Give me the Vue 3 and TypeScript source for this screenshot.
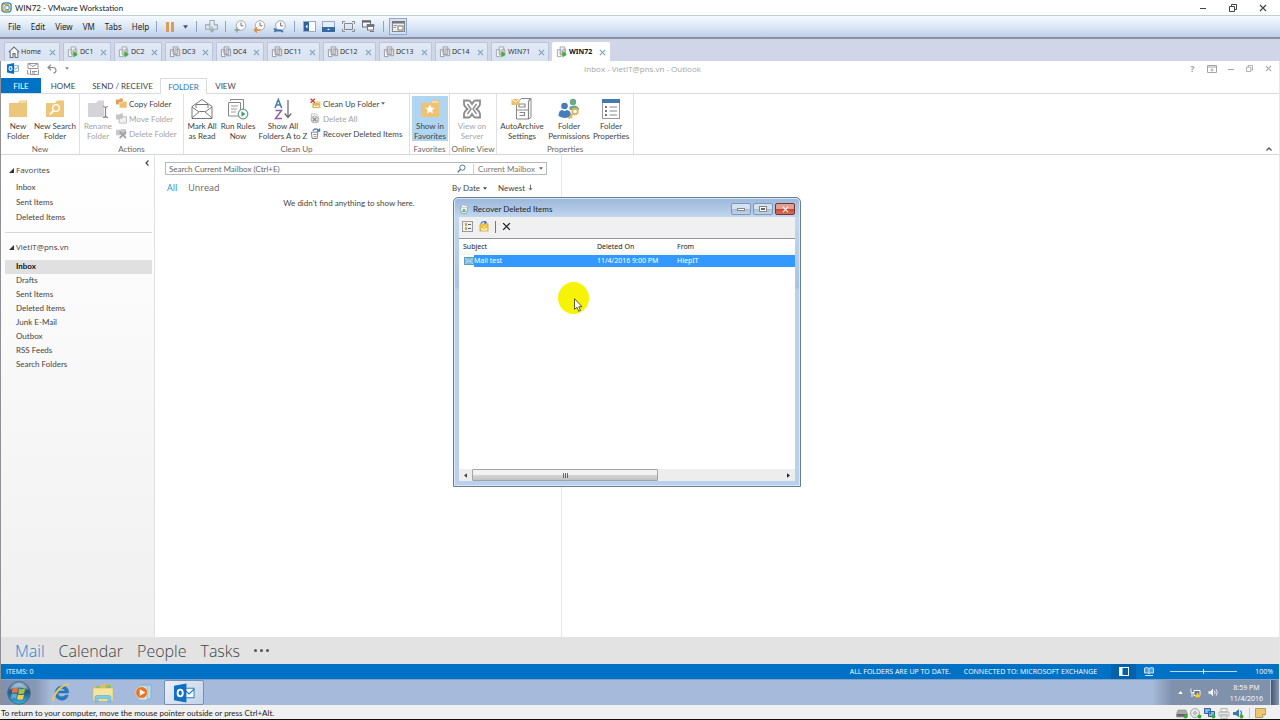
<script setup lang="ts">
import { ref } from 'vue'

interface Tool { id: string; label: string; sep?: boolean; boxed?: boolean }
interface BigButton { icon: string; lines: [string, string]; width: string; disabled?: boolean; active?: boolean }
interface SmallButton { icon: string; label: string; disabled?: boolean; menu?: boolean }
interface Group { name: string; size: string; big: BigButton[]; small?: SmallButton[] }

const menus = ['File', 'Edit', 'View', 'VM', 'Tabs', 'Help']
const tools: Tool[] = [
  { id: 'vm', label: 'Send Ctrl+Alt+Del', sep: true },
  { id: 'snap-add', label: 'Take snapshot', sep: true },
  { id: 'snap-back', label: 'Revert snapshot' },
  { id: 'snap-manage', label: 'Manage snapshots' },
  { id: 'pane-left', label: 'Library', sep: true },
  { id: 'pane-bottom', label: 'Thumbnail bar' },
  { id: 'fullscreen', label: 'Full screen' },
  { id: 'unity', label: 'Unity' },
  { id: 'console', label: 'Console view', sep: true, boxed: true },
]
const vmTabs = [
  { name: 'Home', icon: 'home', size: 'home' },
  { name: 'DC1', icon: 'vm-on', size: 'short' },
  { name: 'DC2', icon: 'vm-on', size: 'short' },
  { name: 'DC3', icon: 'vm-off', size: 'short' },
  { name: 'DC4', icon: 'vm-off', size: 'short' },
  { name: 'DC11', icon: 'vm-off', size: 'mid' },
  { name: 'DC12', icon: 'vm-off', size: 'mid' },
  { name: 'DC13', icon: 'vm-off', size: 'mid' },
  { name: 'DC14', icon: 'vm-off', size: 'mid' },
  { name: 'WIN71', icon: 'vm-on', size: 'long' },
  { name: 'WIN72', icon: 'vm-on', size: 'long' },
]
const activeTab = ref('WIN72')

const groups: Group[] = [
  {
    name: 'New', size: 'g-new',
    big: [
      { icon: 'folder', lines: ['New', 'Folder'], width: 'w34' },
      { icon: 'folder-search', lines: ['New Search', 'Folder'], width: 'w40' },
    ],
  },
  {
    name: 'Actions', size: 'g-actions',
    big: [{ icon: 'rename', lines: ['Rename', 'Folder'], width: 'w36', disabled: true }],
    small: [
      { icon: 'copy', label: 'Copy Folder' },
      { icon: 'move', label: 'Move Folder', disabled: true },
      { icon: 'delete-folder', label: 'Delete Folder', disabled: true },
    ],
  },
  {
    name: 'Clean Up', size: 'g-clean',
    big: [
      { icon: 'mail-open', lines: ['Mark All', 'as Read'], width: 'w36' },
      { icon: 'rules', lines: ['Run Rules', 'Now'], width: 'w36' },
      { icon: 'sort-az', lines: ['Show All', 'Folders A to Z'], width: 'w54' },
    ],
    small: [
      { icon: 'clean', label: 'Clean Up Folder', menu: true },
      { icon: 'delete-all', label: 'Delete All', disabled: true },
      { icon: 'recover', label: 'Recover Deleted Items' },
    ],
  },
  { name: 'Favorites', size: 'g-fav', big: [{ icon: 'folder-star', lines: ['Show in', 'Favorites'], width: 'w36', active: true }] },
  { name: 'Online View', size: 'g-online', big: [{ icon: 'server', lines: ['View on', 'Server'], width: 'w44', disabled: true }] },
  {
    name: 'Properties', size: 'g-props',
    big: [
      { icon: 'archive', lines: ['AutoArchive', 'Settings'], width: 'w50' },
      { icon: 'people', lines: ['Folder', 'Permissions'], width: 'w44' },
      { icon: 'properties', lines: ['Folder', 'Properties'], width: 'w40' },
    ],
  },
]

const favorites = ['Inbox', 'Sent Items', 'Deleted Items']
const folders = ['Inbox', 'Drafts', 'Sent Items', 'Deleted Items', 'Junk E-Mail', 'Outbox', 'RSS Feeds', 'Search Folders']
const modules = ['Mail', 'Calendar', 'People', 'Tasks']
const devices = ['disk', 'cd', 'network', 'printer', 'sound']
const search = ref('')
const zoom = ref(50)
</script>

<template>
  <div class="desktop">
    <svg class="defs" width="0" height="0" aria-hidden="true">
      <defs>
        <linearGradient id="orb" x1="0" y1="0" x2="0" y2="1">
          <stop offset="0" stop-color="#8fb8d6" /><stop offset=".45" stop-color="#24557f" /><stop offset="1" stop-color="#35b4dc" />
        </linearGradient>
      </defs>
      <symbol id="i-vmware" viewBox="0 0 12 12"><rect x="1" y="1" width="10" height="10" rx="3" fill="none" stroke="#4f93a5" stroke-width="1.6" /><rect x="2.2" y="2.6" width="6.4" height="7" rx="2" fill="none" stroke="#e0a43c" stroke-width="1.3" /><rect x="4.2" y="4" width="4.6" height="4.4" rx="1" fill="#eef6f8" stroke="#3c84a0" /></symbol>
      <symbol id="i-pause" viewBox="0 0 10 10"><path d="M1 0h3v10H1zM6 0h3v10H6z" fill="#dd9b58" /></symbol>
      <symbol id="i-caret" viewBox="0 0 6 4"><path d="M0 0h6L3 4z" fill="currentColor" /></symbol>
      <symbol id="i-vm" viewBox="0 0 12 12"><path d="M4.5 .5h4v4M8.5 4.5h3v4h-8M.5 4.5h4v4h-4zM4.5 .5v4M6.5 6v5M4.7 9.2l1.8 2 1.8-2" fill="none" stroke="#a0a7ae" /></symbol>
      <symbol id="i-snap-add" viewBox="0 0 13 13"><circle cx="7" cy="5.5" r="4.8" fill="#f9fafc" stroke="#a9adb3" /><path d="M7 2.5v3.3h2.5" fill="none" stroke="#777" /><path d="M3 7.5v5M.5 10h5" stroke="#86a886" stroke-width="1.3" /></symbol>
      <symbol id="i-snap-back" viewBox="0 0 13 13"><circle cx="7" cy="5.5" r="4.8" fill="#f9fafc" stroke="#b5a99c" /><path d="M7 2.5v3.3h2.5" fill="none" stroke="#777" /><path d="M7.5 10H2M4 7.5L1.5 10 4 12.5" fill="none" stroke="#e28c38" stroke-width="1.6" /></symbol>
      <symbol id="i-snap-manage" viewBox="0 0 13 13"><circle cx="7.5" cy="5.5" r="4.8" fill="#f9fafc" stroke="#9ba6b6" /><path d="M7.5 2.5v3.3H10" fill="none" stroke="#777" /><path d="M1 8.5l2 1.5-1.5 2M3 10.5h5l2 1.5" fill="none" stroke="#3e6fa8" stroke-width="1.8" /></symbol>
      <symbol id="i-pane-left" viewBox="0 0 13 11"><rect x=".5" y=".5" width="12" height="10" fill="#fafcff" stroke="#9aa9bf" /><path d="M1 1h5v9H1z" fill="#2f609c" /><path d="M4.5 3.5v4l-2-2z" fill="#fff" /></symbol>
      <symbol id="i-pane-bottom" viewBox="0 0 13 11"><rect x=".5" y=".5" width="12" height="10" fill="#e5edf8" stroke="#9aa9bf" /><path d="M0 6h13v5H0z" fill="#3567a1" /><path d="M5 9h3L6.5 7.5z" fill="#fff" /></symbol>
      <symbol id="i-fullscreen" viewBox="0 0 13 11"><path d="M2.5 2.5h8v6h-8zM.5 3V.5H3M10 .5h2.5V3M12.5 8v2.5H10M3 10.5H.5V8" fill="none" stroke="#85888e" /></symbol>
      <symbol id="i-unity" viewBox="0 0 13 12"><rect x=".5" y=".5" width="8" height="6" fill="#f7f7f7" stroke="#6b6f75" /><path d="M0 0h9v2H0z" fill="#5f6368" /><rect x="5.5" y="4.5" width="6" height="5" fill="#fff" stroke="#777" /><path d="M5 4h7v2H5zM8 11h4" stroke="#777" fill="#777" /></symbol>
      <symbol id="i-console" viewBox="0 0 13 11"><rect x=".5" y=".5" width="12" height="10" fill="#eee" stroke="#888" /><path d="M0 0h13v2.5H0z" fill="#777" /><path d="M1.5 4.5H5M1.5 6.5H4" stroke="#999" /><rect x="6" y="5" width="5" height="4" fill="#fff" stroke="#777" /></symbol>
      <symbol id="i-home" viewBox="0 0 11 11"><path d="M.7 5.7L5.5 1l4.8 4.7M2 5v5.5h2.5V7h2v3.5H9V5" fill="#fff" stroke="#6c7076" /></symbol>
      <symbol id="i-vm-off" viewBox="0 0 13 13"><path d="M4.5 1h5v8h-5zM1.5 4h4v7.5h-4zM7.5 3.5h4v7h-4z" fill="#f4f5f8" stroke="#92969d" /><path d="M6 3h1.5M3 6h1M9 5.5h1" stroke="#92969d" /></symbol>
      <symbol id="i-vm-on" viewBox="0 0 13 13"><path d="M4.5 1h5v8h-5zM1.5 4h4v7.5h-4zM7.5 3.5h3v7h-3z" fill="#f4f5f8" stroke="#a2a5aa" /><path d="M7 5.5L11.5 9 7 12.5z" fill="#3fae38" /></symbol>
      <symbol id="i-close" viewBox="0 0 8 8"><path d="M1 1l6 6M7 1L1 7" stroke="currentColor" stroke-width="1.2" /></symbol>
      <symbol id="i-min" viewBox="0 0 8 8"><path d="M1 4.5h6" stroke="currentColor" /></symbol>
      <symbol id="i-restore" viewBox="0 0 8 8"><path d="M.5 2.5h5v5h-5zM2.5 2.5v-2h5v5h-2" fill="none" stroke="currentColor" /></symbol>
      <symbol id="i-ribbon-opts" viewBox="0 0 10 8"><path d="M.5 .5h9v7h-9zM.5 2h9M5 6.5V3.5M3.5 5h3" fill="none" stroke="currentColor" /></symbol>
      <symbol id="i-outlook" viewBox="0 0 22 20"><rect x="10" y="5" width="11" height="10" fill="#fff" stroke="#2a78c2" /><path d="M10.5 6l5.2 5L21 6" fill="none" stroke="#2a78c2" stroke-width="1.3" /><path d="M0 2.5L13 0v20L0 17.5z" fill="#0f6fc4" /><ellipse cx="6.5" cy="10" rx="2.7" ry="3.5" fill="none" stroke="#fff" stroke-width="2" /></symbol>
      <symbol id="i-sendrecv" viewBox="0 0 12 12"><path d="M1 .5h10v5H1zM1 .5l5 3 5-3M3.5 6.5v5h8v-5M5 8.5h5M5 10h3M.5 7v4h2" fill="none" stroke="#959595" /></symbol>
      <symbol id="i-undo" viewBox="0 0 10 10"><path d="M4 .8L1 3.5l3 2.7M1 3.5h4.5q3.5.3 3.5 3 0 2-2.5 2.7" fill="none" stroke="#8b8b8b" stroke-width="1.2" /></symbol>

      <symbol id="i-folder" viewBox="0 0 22 22"><path d="M2 5h9l2-2.5h7V19H2z" fill="#ecc679" /><path d="M13 4h6" stroke="#fff4d9" /></symbol>
      <symbol id="i-folder-search" viewBox="0 0 22 22"><path d="M2 5h9l2-2.5h7V19H2z" fill="#ecc679" /><circle cx="12" cy="10" r="3.3" fill="none" stroke="#fff" stroke-width="1.3" /><path d="M9.7 12.5L6 16.3" stroke="#fff" stroke-width="1.8" /></symbol>
      <symbol id="i-folder-star" viewBox="0 0 22 22"><path d="M2 5h9l2-2.5h7V19H2z" fill="#efc374" /><path d="M13 4h6" stroke="#fff4d9" /><path d="M11 6.5l1.4 3.1 3.4.3-2.6 2.2.8 3.4-3-1.8-3 1.8.8-3.4-2.6-2.2 3.4-.3z" fill="#fff" /></symbol>
      <symbol id="i-rename" viewBox="0 0 22 22"><path d="M1 5h8l2-2.5h6V19H1z" fill="#d5d3d8" /><path d="M16 8.5q2.5 0 2.5 2v7q0 2-2.5 2M21 8.5q-2.5 0-2.5 2v7q0 2 2.5 2" fill="none" stroke="#888" stroke-width="1.2" /></symbol>
      <symbol id="i-copy" viewBox="0 0 12 12"><path d="M0 1.5h3.5l1-1h3V7H0z" fill="#dda258" /><path d="M3.5 5H7l1-1.5h4V11H3.5z" fill="#edc06f" stroke="#fff" stroke-width=".6" /></symbol>
      <symbol id="i-move" viewBox="0 0 12 12"><path d="M0 1.5h3.5l1-1h3V7H0z" fill="#c7c5c8" /><path d="M3.5 5.5H7L8 4h3.5v7h-8z" fill="#f0eff1" stroke="#bbb" /></symbol>
      <symbol id="i-delete-folder" viewBox="0 0 12 12"><path d="M0 2h5l1-1h5v7H0z" fill="#c9c7ca" /><path d="M4 4l7 7M11 4l-7 7" stroke="#a19ea4" stroke-width="2" /></symbol>
      <symbol id="i-mail-open" viewBox="0 0 22 22"><path d="M1 8.5l10-7 10 7v12H1z" fill="#fff" stroke="#777" /><path d="M5 10V6.5h12V10M1 20l7.5-6.5h5L21 20M1 9l7 5M21 9l-7 5" fill="none" stroke="#777" /></symbol>
      <symbol id="i-rules" viewBox="0 0 22 22"><path d="M3.5 3V1.5h13V14M1.5 4.5h12V18h-12z" fill="#fff" stroke="#888" /><path d="M4 8h7M4 11h6M4 14h5" stroke="#999" /><circle cx="16" cy="16" r="4.8" fill="#fff" stroke="#6aa083" stroke-width="1.2" /><path d="M14.5 13.3l4 2.7-4 2.7z" fill="#4a9670" /></symbol>
      <symbol id="i-sort-az" viewBox="0 0 22 22"><path d="M3 10L6.3 1.5 9.7 10M4.2 7h4.3" fill="none" stroke="#437bb1" stroke-width="1.5" /><path d="M3.5 12.5h6l-6 8H10" fill="none" stroke="#9361a6" stroke-width="1.5" /><path d="M16 2v17M12.7 15.5l3.3 4 3.3-4" fill="none" stroke="#666" stroke-width="1.2" /></symbol>
      <symbol id="i-clean" viewBox="0 0 12 12"><path d="M2 5h4l1-1.5h4.5V11H2z" fill="#f2d48f" /><path d="M4 6.5h6v4H4zM4 6.5l3 2.3 3-2.3" fill="#fff" stroke="#df9f45" /><path d="M.7 .7l4.6 4.6M5.3 .7L.7 5.3" stroke="#c5423e" stroke-width="1.5" /></symbol>
      <symbol id="i-delete-all" viewBox="0 0 12 12"><path d="M1.5 5V1h5l3 3v6H7" fill="none" stroke="#bbb" /><circle cx="5" cy="7" r="3.8" fill="#e5e5e5" stroke="#aaa" /><path d="M3 5l4 4M7 5L3 9" stroke="#888" stroke-width="1.2" /></symbol>
      <symbol id="i-recover" viewBox="0 0 12 12"><path d="M1.5 4.5h7l-.7 7H2.3z" fill="#fff" stroke="#777" /><path d="M3.5 7H7M4 9.5h3" stroke="#888" /><path d="M3 3q3-4 7 0M10.5 .5v3h-3" fill="none" stroke="#4678a4" stroke-width="1.3" /></symbol>
      <symbol id="i-server" viewBox="0 0 22 22"><path d="M3 6V2.5h4.500q1.500 0 3.500 3.500 2-3.500 3.500-3.500H19V6q0 2-3.500 5 3.500 3 3.500 5v3.500h-4.500q-1.500 0-3.500-3.500-2 3.500-3.500 3.500H3V16q0-2 3.500-5Q3 8 3 6z" fill="#fff" stroke="#8c8c8c" stroke-width="1.8" /><path d="M6.500 6L10 11l-3.500 5M15.500 6L12 11l3.500 5" fill="none" stroke="#8c8c8c" stroke-width="1.4" /></symbol>
      <symbol id="i-archive" viewBox="0 0 22 22"><path d="M8 2.5l2.5-2H20v19L17.5 21h-12V3z" fill="#fff" stroke="#888" /><path d="M5.5 12h12M17.5 3v18M17.5 3L20 .5M8 9h6V6H8zM8.5 17.5h5v-3h-5" fill="none" stroke="#888" stroke-width="1.2" /><path d="M.5 1h8v6h-8z" fill="#edbf69" /><path d="M.5 1l4 3 4-3" fill="none" stroke="#fff" /></symbol>
      <symbol id="i-people" viewBox="0 0 22 22"><circle cx="15" cy="4" r="3.2" fill="#68a98b" /><path d="M11 9q8-4 10 2v1h-9z" fill="#68a98b" /><circle cx="6.5" cy="8" r="3.3" fill="#437fba" /><path d="M.5 18q0-6 4-6 2 2 4 0 4.5 0 4.5 6-6 4-12.5 0z" fill="#437fba" /><circle cx="17" cy="13.5" r="2.7" fill="none" stroke="#e5b45f" stroke-width="1.9" /><path d="M15 15.5l-4.5 5M12.5 18.5L14 20" stroke="#e5b45f" stroke-width="1.9" /></symbol>
      <symbol id="i-properties" viewBox="0 0 22 22"><rect x="2.5" y="1.5" width="17" height="19" fill="#fff" stroke="#999" /><path d="M2 1h18v4H2z" fill="#437ab0" /><path d="M9.5 9H17M9.5 13H17M9.5 17H17" stroke="#888" stroke-width="1.2" /><path d="M5 8h2v2H5zM5 12h2v2H5zM5 16h2v2H5z" fill="#777" /></symbol>

      <symbol id="i-triangle" viewBox="0 0 5 5"><path d="M5 0v5H0z" fill="#333" /></symbol>
      <symbol id="i-search" viewBox="0 0 10 10"><circle cx="6" cy="4" r="2.9" fill="none" stroke="#3f6b9a" /><path d="M4 6L.8 9.2" stroke="#3f6b9a" stroke-width="1.4" /></symbol>
      <symbol id="i-down" viewBox="0 0 6 8"><path d="M3 0v6M1 4l2 2.5L5 4" fill="none" stroke="#555" /></symbol>
      <symbol id="i-chev-left" viewBox="0 0 4 6"><path d="M3.5 .5L1 3l2.5 2.5" fill="none" stroke="#444" stroke-width="1.2" /></symbol>
      <symbol id="i-chev-up" viewBox="0 0 6 4"><path d="M.5 3.5L3 1l2.5 2.5" fill="none" stroke="#555" stroke-width="1.3" /></symbol>
      <symbol id="i-up" viewBox="0 0 6 4"><path d="M0 4h6L3 0z" fill="#fff" /></symbol>

      <symbol id="i-bin" viewBox="0 0 10 10"><path d="M1 3h8L7.5 9.5h-5z" fill="#eef6f3" stroke="#8fb0a6" /><path d="M2 3L4 .7l4 1L8.500 3" fill="#fff" stroke="#a5bcc0" /><path d="M3.5 7.5L5 5l1.5 2.5z" fill="none" stroke="#4fa276" /></symbol>
      <symbol id="i-select-all" viewBox="0 0 11 11"><rect x=".5" y=".5" width="10" height="10" fill="none" stroke="#444" stroke-dasharray="1 1" /><path d="M3 2h2v3H3zM3 6h2v3H3z" fill="#d4a432" /><path d="M6 3.5h3M6 7.5h3" stroke="#4a5fa8" /></symbol>
      <symbol id="i-restore-mail" viewBox="0 0 11 12"><path d="M1 4h3l1-1h5v8H1z" fill="#f4c846" stroke="#c69a2b" stroke-width=".7" /><path d="M3 6.5h6v4H3z" fill="#fff3bd" /><path d="M3 6.5l3 2 3-2" fill="none" stroke="#c69a2b" /><path d="M2 3q1-3 5-2M5.5 0L8 1.3 6 3" fill="none" stroke="#416bb1" stroke-width="1.2" /></symbol>
      <symbol id="i-mail" viewBox="0 0 10 8"><rect x=".5" y=".5" width="9" height="7" fill="#82bdd6" stroke="#5d9fc3" /><path d="M1 1.5l4 3 4-3M1 7l3-3M9 7L6 4" fill="none" stroke="#b5deea" /></symbol>
      <symbol id="i-arrow-left" viewBox="0 0 4 6"><path d="M4 0v6L0 3z" fill="#444" /></symbol>
      <symbol id="i-arrow-right" viewBox="0 0 4 6"><path d="M0 0v6l4-3z" fill="#222" /></symbol>
      <symbol id="i-pointer" viewBox="0 0 9 14"><path d="M.5 .7v10.6l2.5-2 1.7 4 1.8-.8-1.7-3.8H8z" fill="#fff" stroke="#333" stroke-width=".8" /></symbol>

      <symbol id="i-start" viewBox="0 0 24 24"><circle cx="12" cy="12" r="11.3" fill="url(#orb)" stroke="#49698b" /><path d="M5.5 8q3-2 5.5-.6l-.8 4.6q-2.7-1.2-5.5.4z" fill="#ed713b" /><path d="M12 7.7q3 1.3 6.2-.2l-1 4.7q-3 1.5-6 .2z" fill="#9ec53c" /><path d="M4.5 13.3q3-1.5 5.6-.3l-1 4.6q-2.5-1.2-5 .3z" fill="#58a8e4" /><path d="M11 13.4q3 1.3 6 0l-1 4.5q-3 1.4-5.9.1z" fill="#f8cf44" /><path d="M3 8Q12-3 21 8 12 5 3 8z" fill="#fff" opacity=".35" /></symbol>
      <symbol id="i-ie" viewBox="0 0 22 22"><path d="M18.5 11.5H7q.5 4 4.3 4 2.7 0 3.6-1.7h3.2Q16.5 19 11.2 19 4.5 18.500 4.3 12 4.6 4.5 11.5 4.3q7 .3 7 7.200zM7.200 9.5h7.600q-.6-2.700-3.600-2.700-3.300 0-4 2.700z" fill="#237cc4" stroke="#1b66a7" stroke-width=".5" /><path d="M4.5 20Q-.5 22 2 15 6 6 14 2.5q6-2.500 6 2-1-2.500-5-.5-7 4-11 12-1.500 4 .5 4z" fill="#eec656" /></symbol>
      <symbol id="i-explorer" viewBox="0 0 22 20"><path d="M1 3h7l1-2h11v14H1z" fill="#d9bd68" /><path d="M1 5h20v13H1z" fill="#f5e5a0" stroke="#cfb568" stroke-width=".6" /><path d="M4 3h4v2H4zM14 2h5v3h-5z" fill="#90bd77" /><path d="M3 19v-5q0-1.5 2-1.5h12q2 0 2 1.5v5h-3v-3.500H6V19z" fill="#84cbe5" stroke="#5daccb" stroke-width=".6" /></symbol>
      <symbol id="i-wmp" viewBox="0 0 18 18"><path d="M7 1h10v15H7z" fill="#bbdcec" stroke="#78b4d0" /><path d="M4 2h9v15H4z" fill="#d3eaf4" stroke="#86bfda" /><circle cx="7" cy="9" r="6.2" fill="#ea7326" stroke="#f8d4b5" stroke-width=".7" /><path d="M5 5.5L11 9l-6 3.500z" fill="#fff" /></symbol>
      <symbol id="i-net" viewBox="0 0 10 10"><path d="M3.5 2.5h6v5h-6zM.5 .5v4h3M1.5 4.5V9" fill="#617188" stroke="#f4f6f8" /><path d="M7 4l3 5.500H4z" fill="#f5cf3d" stroke="#aa8424" stroke-width=".4" /></symbol>
      <symbol id="i-volume" viewBox="0 0 11 10"><path d="M.5 3.5H3l2.5-3v9L3 6.5H.5z" fill="#fff" /><path d="M7 3q1.5 2 0 4M9 1.5q2.5 3.500 0 7" fill="none" stroke="#fff" stroke-width=".9" /></symbol>
      <symbol id="i-view-normal" viewBox="0 0 10 9"><rect x=".5" y=".5" width="9" height="8" fill="none" stroke="#fff" /><path d="M0 0h3.5v9H0z" fill="#fff" /></symbol>
      <symbol id="i-view-read" viewBox="0 0 10 9"><path d="M.5 1q3-1 4.500.5Q6.500 0 9.500 1v5q-3-.7-4.500.6Q3.500 5.300 .5 6zM5 1.500V7M1 8.500h8" fill="#4c9fd9" stroke="#c9e4f5" /></symbol>

      <symbol id="i-disk" viewBox="0 0 12 11"><path d="M2 2h8l1.5 4v3H.5V6z" fill="#aaa" stroke="#888" stroke-width=".6" /><path d="M1 6h10v2.5H1z" fill="#666" /><circle cx="9.5" cy="8.5" r="2" fill="#3faa3a" /></symbol>
      <symbol id="i-cd" viewBox="0 0 12 11"><circle cx="5" cy="5" r="4.5" fill="#e5e7e8" stroke="#aaa" /><circle cx="5" cy="5" r="1.3" fill="#fff" stroke="#999" /><circle cx="9.5" cy="8.5" r="2" fill="#3faa3a" /></symbol>
      <symbol id="i-network" viewBox="0 0 12 11"><path d="M.5 .5h6v5h-6zM4.5 3.5h6v5h-6z" fill="#87b5df" stroke="#2b659f" /><circle cx="9.5" cy="8.5" r="2" fill="#3faa3a" /></symbol>
      <symbol id="i-printer" viewBox="0 0 12 11"><path d="M3 .5h6V4H3zM1 4h10v4H1zM3 6.5h6v4H3z" fill="#ececec" stroke="#aaa" stroke-width=".8" /></symbol>
      <symbol id="i-sound" viewBox="0 0 12 11"><path d="M1 4h2.5L7 1v8L3.5 7H1z" fill="#3f79a9" /><path d="M8.5 2.5q2 2.500 0 5" fill="none" stroke="#3f79a9" stroke-width="1.2" /><circle cx="9.5" cy="8.5" r="2" fill="#3faa3a" /></symbol>
      <symbol id="i-note" viewBox="0 0 11 10"><path d="M.5 .5h10v6l-3 3h-7z" fill="#edc674" stroke="#b99b5c" /><path d="M7.5 9.5v-3h3" fill="#fbe9bb" stroke="#b99b5c" /></symbol>
    </svg>

    <header class="vm-title">
      <svg width="11" height="11"><use href="#i-vmware" /></svg>
      <span class="grow">WIN72 - VMware Workstation</span>
      <div class="vm-window">
        <button aria-label="Minimize"><svg width="8" height="8"><use href="#i-min" /></svg></button>
        <button aria-label="Restore"><svg width="8" height="8"><use href="#i-restore" /></svg></button>
        <button aria-label="Close"><svg width="8" height="8"><use href="#i-close" /></svg></button>
      </div>
    </header>

    <div class="vm-bar">
      <nav class="vm-menu"><button v-for="m in menus" :key="m">{{ m }}</button></nav>
      <div class="vm-tools">
        <i class="sep"></i>
        <button aria-label="Suspend"><svg width="10" height="10"><use href="#i-pause" /></svg></button>
        <button class="narrow" aria-label="Power options"><svg width="5" height="4"><use href="#i-caret" /></svg></button>
        <template v-for="t in tools" :key="t.id">
          <i v-if="t.sep" class="sep"></i>
          <button :class="{ boxed: t.boxed }" :aria-label="t.label"><svg width="13" height="13"><use :href="`#i-${t.id}`" /></svg></button>
        </template>
      </div>
    </div>

    <div class="vm-tabs">
      <div v-for="t in vmTabs" :key="t.name" class="vm-tab" :class="[t.size, { active: t.name === activeTab }]">
        <button class="vm-name" @click="activeTab = t.name">
          <svg width="12" height="12"><use :href="`#i-${t.icon}`" /></svg>{{ t.name }}
        </button>
        <button class="vm-close" :aria-label="`Close ${t.name}`"><svg width="7" height="7"><use href="#i-close" /></svg></button>
      </div>
    </div>

    <div class="guest">
      <header class="ol-title">
        <div class="quick">
          <svg width="12" height="11"><use href="#i-outlook" /></svg>
          <button aria-label="Send/Receive All"><svg width="12" height="12"><use href="#i-sendrecv" /></svg></button>
          <button aria-label="Undo"><svg width="10" height="10"><use href="#i-undo" /></svg></button>
          <button aria-label="Customize toolbar"><svg width="4" height="3"><use href="#i-caret" /></svg></button>
        </div>
        <h1>Inbox - VietIT@pns.vn - Outlook</h1>
        <div class="ol-window">
          <button aria-label="Help">?</button>
          <button aria-label="Ribbon options"><svg width="10" height="8"><use href="#i-ribbon-opts" /></svg></button>
          <button aria-label="Minimize"><svg width="8" height="8"><use href="#i-min" /></svg></button>
          <button aria-label="Restore"><svg width="7" height="7"><use href="#i-restore" /></svg></button>
          <button aria-label="Close"><svg width="7" height="7"><use href="#i-close" /></svg></button>
        </div>
      </header>

      <nav class="ribbon-tabs">
        <button class="t-file">FILE</button>
        <button class="t-home">HOME</button>
        <button class="t-send">SEND / RECEIVE</button>
        <button class="t-folder">FOLDER</button>
        <button class="t-view">VIEW</button>
      </nav>

      <div class="ribbon">
        <section v-for="g in groups" :key="g.name" class="group" :class="g.size">
          <div class="group-body">
            <button v-for="b in g.big" :key="b.icon" class="big" :class="[b.width, { active: b.active }]" :disabled="b.disabled">
              <svg width="22" height="22"><use :href="`#i-${b.icon}`" /></svg>
              <span>{{ b.lines[0] }}</span><span>{{ b.lines[1] }}</span>
            </button>
            <div v-if="g.small" class="small-col">
              <button v-for="s in g.small" :key="s.icon" class="small" :disabled="s.disabled">
                <svg width="11" height="11"><use :href="`#i-${s.icon}`" /></svg>{{ s.label }}
                <svg v-if="s.menu" class="mini" width="4" height="3"><use href="#i-caret" /></svg>
              </button>
            </div>
          </div>
          <h2>{{ g.name }}</h2>
        </section>
        <button class="collapse" aria-label="Collapse the ribbon"><svg width="6" height="4"><use href="#i-chev-up" /></svg></button>
      </div>

      <main class="work">
        <aside class="folders">
          <button class="fold" aria-label="Minimize folder pane"><svg width="4" height="6"><use href="#i-chev-left" /></svg></button>
          <h3><svg width="5" height="5"><use href="#i-triangle" /></svg>Favorites</h3>
          <ul class="favs"><li v-for="f in favorites" :key="f"><a href="#">{{ f }}</a></li></ul>
          <hr />
          <h3><svg width="5" height="5"><use href="#i-triangle" /></svg>VietIT@pns.vn</h3>
          <ul class="tree"><li v-for="(f, i) in folders" :key="f" :class="{ selected: i === 0 }"><a href="#">{{ f }}</a></li></ul>
        </aside>

        <section class="messages">
          <div class="search">
            <input v-model="search" type="text" aria-label="Search" placeholder="Search Current Mailbox (Ctrl+E)" />
            <button aria-label="Search now"><svg width="9" height="9"><use href="#i-search" /></svg></button>
            <select aria-label="Search scope"><option>Current Mailbox</option></select>
            <svg class="mini" width="4" height="3"><use href="#i-caret" /></svg>
          </div>
          <div class="filters">
            <button class="on">All</button><button>Unread</button>
            <span class="grow"></span>
            <button class="sort">By Date <svg width="4" height="3"><use href="#i-caret" /></svg></button>
            <button class="sort">Newest <svg width="5" height="8"><use href="#i-down" /></svg></button>
          </div>
          <p class="empty">We didn't find anything to show here.</p>
        </section>
        <section class="reading"></section>

        <div class="dialog" role="dialog" aria-labelledby="dlg-title">
          <div class="dlg-title">
            <svg width="10" height="10"><use href="#i-bin" /></svg>
            <span id="dlg-title" class="grow">Recover Deleted Items</span>
            <button aria-label="Minimize"><i class="glyph-min"></i></button>
            <button aria-label="Maximize"><i class="glyph-max"></i></button>
            <button class="red" aria-label="Close"><svg width="7" height="7"><use href="#i-close" /></svg></button>
          </div>
          <div class="dlg-body">
            <div class="dlg-tools">
              <button aria-label="Select All"><svg width="11" height="11"><use href="#i-select-all" /></svg></button>
              <button aria-label="Recover Selected Items"><svg width="10" height="11"><use href="#i-restore-mail" /></svg></button>
              <i></i>
              <button aria-label="Purge Selected Items"><svg width="9" height="9"><use href="#i-close" /></svg></button>
            </div>
            <div class="dlg-list">
              <table>
                <thead><tr><th class="c-subject">Subject</th><th class="c-date">Deleted On</th><th>From</th></tr></thead>
                <tbody>
                  <tr><td><div class="subject"><svg width="10" height="8"><use href="#i-mail" /></svg><span>Mail test</span></div></td><td class="hl">11/4/2016 9:00 PM</td><td class="hl">HiepIT</td></tr>
                </tbody>
              </table>
            </div>
            <div class="scroll">
              <button aria-label="Scroll left"><svg width="3" height="5"><use href="#i-arrow-left" /></svg></button>
              <div class="track"><div class="thumb"><i></i><i></i><i></i></div></div>
              <button aria-label="Scroll right"><svg width="3" height="5"><use href="#i-arrow-right" /></svg></button>
            </div>
          </div>
        </div>
        <div class="spot"><svg width="9" height="14"><use href="#i-pointer" /></svg></div>
      </main>

      <nav class="modules">
        <a v-for="(m, i) in modules" :key="m" href="#" :class="{ on: i === 0 }">{{ m }}</a>
        <button aria-label="More"><i></i><i></i><i></i></button>
      </nav>

      <footer class="status">
        <span class="grow">ITEMS: 0</span>
        <span>ALL FOLDERS ARE UP TO DATE.</span>
        <span class="conn">CONNECTED TO: MICROSOFT EXCHANGE</span>
        <button class="view on" aria-label="Normal view"><svg width="10" height="9"><use href="#i-view-normal" /></svg></button>
        <button class="view" aria-label="Reading view"><svg width="10" height="9"><use href="#i-view-read" /></svg></button>
        <input v-model="zoom" type="range" min="0" max="100" aria-label="Zoom" />
        <span>100%</span>
      </footer>

      <div class="taskbar">
        <button class="start" aria-label="Start"><svg width="24" height="24"><use href="#i-start" /></svg></button>
        <button aria-label="Internet Explorer"><svg width="21" height="21"><use href="#i-ie" /></svg></button>
        <button aria-label="Windows Explorer"><svg width="22" height="20"><use href="#i-explorer" /></svg></button>
        <button aria-label="Windows Media Player"><svg width="17" height="17"><use href="#i-wmp" /></svg></button>
        <button class="running" aria-label="Outlook"><svg width="21" height="20"><use href="#i-outlook" /></svg></button>
        <span class="grow"></span>
        <div class="tray">
          <svg width="5" height="3"><use href="#i-up" /></svg>
          <svg width="11" height="10"><use href="#i-net" /></svg>
          <svg width="10" height="9"><use href="#i-volume" /></svg>
          <time>8:59 PM<br />11/4/2016</time>
          <button class="peek" aria-label="Show desktop"></button>
        </div>
      </div>
    </div>

    <footer class="vm-status">
      <span class="grow">To return to your computer, move the mouse pointer outside or press Ctrl+Alt.</span>
      <svg v-for="d in devices" :key="d" width="12" height="11"><use :href="`#i-${d}`" /></svg>
      <i></i>
      <svg width="11" height="10"><use href="#i-note" /></svg>
    </footer>
  </div>
</template>

<style>
body { margin: 0; background: #fff; }
</style>

<style scoped>
.desktop { --ui: Lato, "Open Sans", sans-serif; --wide: "Open Sans", "Noto Sans", sans-serif; --classic: "Noto Sans", "Open Sans", sans-serif; min-height: 100vh; display: flex; flex-direction: column; font-family: var(--ui); font-size: 8px; line-height: 10px; color: #444; background: #fff; overflow: hidden; }
.desktop *, .desktop *::before { box-sizing: border-box; }
.defs { position: absolute; }
svg { flex: none; display: block; }
button { font: inherit; color: inherit; background: none; border: 0; padding: 0; margin: 0; display: flex; align-items: center; justify-content: center; white-space: nowrap; }
a { color: inherit; text-decoration: none; }
h1, h2, h3, p, ul { margin: 0; padding: 0; font-weight: 400; font-size: inherit; list-style: none; }
.grow { flex: 1; }

.vm-title { height: 15px; display: flex; align-items: center; gap: 3px; padding-left: 1px; color: #222; }
.vm-window { display: flex; padding-right: 2px; }
.vm-window button { width: 30px; color: #444; }
.vm-bar { height: 24px; display: flex; align-items: center; border-top: 1px solid #bdd0da; border-bottom: 2px solid #8a91a3; background: linear-gradient(#f6fafe, #dce8f6 50%, #bfcee9); color: #222; }
.vm-menu { display: flex; gap: 10px; width: 149px; padding-left: 8px; font-family: var(--classic); }
.vm-tools { display: flex; align-items: center; }
.vm-tools .sep { width: 1px; height: 11px; margin: 0 5px; background: #8ea3c6; }
.vm-tools button { width: 20px; height: 17px; color: #39568d; }
.vm-tools .sep:first-child { margin: 0 4px 0 7px; }
.vm-tools .sep + button { width: 18px; }
.vm-tools .narrow { width: 12px; }
.vm-tools .boxed { border: 1px solid #8ea8d3; background: #d4e1f5; }
.vm-tabs { height: 22px; display: flex; align-items: flex-end; gap: 3px; padding-left: 4px; background: #d0d6e8; color: #333; font-family: var(--classic); font-size: 7px; }
.vm-tab { height: 19px; display: flex; align-items: center; justify-content: space-between; padding: 0 3px; background: linear-gradient(#e3eaf6, #d8e2f1); border: 1px solid #bac5dc; border-bottom: 0; border-radius: 2px 2px 0 0; }
.vm-tab.home { width: 56px; }
.vm-tab.short { width: 48px; }
.vm-tab.mid { width: 53px; }
.vm-tab.long { width: 58px; }
.vm-tab.active { background: #fff; border-color: #fff; font-weight: 700; color: #111; }
.vm-name { gap: 1px; }
.vm-close { color: #7ba0bd; }

.guest { flex: 1; display: flex; flex-direction: column; border-left: 1px solid #8f9094; border-right: 1px solid #e4e7ee; }
.ol-title { height: 17px; display: flex; align-items: center; padding-bottom: 2px; color: #a5a5a5; font-family: var(--wide); }
.quick { flex: 1; display: flex; align-items: center; gap: 8px; padding-left: 6px; color: #888; }
.ol-window { flex: 1; display: flex; justify-content: flex-end; padding-right: 1px; }
.ol-window button { width: 19px; font-size: 9px; font-weight: 700; }
.ribbon-tabs { height: 16px; display: flex; align-items: stretch; border-bottom: 1px solid #dadbdc; }
.t-file { width: 40px; background: #0072c6; color: #fff; }
.t-home { width: 44px; }
.t-send { width: 75px; }
.t-folder { width: 47px; height: 16px; border: 1px solid #dadbdc; border-bottom: 0; background: #fff; color: #1d78b5; }
.t-view { width: 37px; }
.ribbon { height: 61px; display: flex; border-bottom: 1px solid #d4d5d6; }
.group { display: flex; flex-direction: column; border-right: 1px solid #e1e1e1; padding-top: 2px; }
.g-new { width: 79px; } .g-actions { width: 104px; } .g-clean { width: 226px; } .g-fav { width: 40px; } .g-online { width: 47px; } .g-props { width: 137px; }
.group-body { height: 46px; display: flex; }
.group h2 { text-align: center; line-height: 16px; color: #666; white-space: nowrap; }
.big { flex-direction: column; justify-content: flex-start; padding-top: 2px; line-height: 10px; }
.big svg { margin-bottom: 1px; }
.big.active { background: #afd5f0; margin-left: 2px; }
.w34 { width: 34px; } .w36 { width: 36px; } .w40 { width: 40px; } .w44 { width: 44px; } .w50 { width: 50px; } .w54 { width: 54px; }
.big:disabled, .small:disabled { color: #a5a5a5; }
.small-col { display: flex; flex-direction: column; }
.small { height: 15px; gap: 2px; justify-content: flex-start; }
.mini { color: #666; }
.collapse { margin-left: auto; align-self: flex-end; width: 20px; height: 10px; }

.work { flex: 1; display: flex; position: relative; min-height: 482px; }
.folders { width: 154px; padding: 2px 2px 0 4px; background: linear-gradient(#fff, #f0f0f0); border-right: 1px solid #e1e1e1; position: relative; }
.fold { position: absolute; top: 3px; right: 2px; width: 10px; height: 9px; }
.folders h3 { display: flex; align-items: center; gap: 2px; height: 26px; padding-left: 4px; font-family: var(--wide); }
.favs li { height: 15px; line-height: 16px; padding-left: 11px; }
.tree li { height: 14px; line-height: 13px; padding-left: 11px; }
.favs { margin-bottom: 8px; margin-top: -4px; }
.tree li.selected { background: #e0e0e0; color: #111; font-weight: 700; }
.folders hr { border: 0; border-top: 1px solid #d8d8d8; margin: 0 0 1px; }
.messages { width: 407px; padding: 7px 14px 0 10px; border-right: 1px solid #e6e6e6; }
.search { height: 13px; display: flex; align-items: center; border: 1px solid #b5b8bc; padding: 0 3px; }
.search input { flex: 1; min-width: 0; border: 0; outline: 0; padding: 0; background: none; font: inherit; color: #444; }
.search input::placeholder { color: #666; opacity: 1; }
.search button { width: 14px; margin-right: 5px; }
.search select { appearance: none; border: 0; border-left: 1px solid #ccc; outline: 0; padding: 0 0 0 4px; width: 66px; background: none; font: inherit; color: #777; }
.filters { display: flex; align-items: center; gap: 11px; height: 22px; margin-top: 2px; padding: 0 14px 0 2px; font-family: var(--wide); font-size: 9px; color: #666; }
.filters .on { color: #2a8dd4; }
.filters .sort { font-family: var(--ui); font-size: 8px; gap: 3px; color: #444; }
.empty { text-align: center; padding-right: 14px; line-height: 8px; }
.reading { flex: 1; }

.dialog { position: absolute; left: 452px; top: 42px; width: 348px; height: 290px; display: flex; flex-direction: column; padding: 0 5px 5px; border: 1px solid #66808f; border-radius: 5px 5px 0 0; background: linear-gradient(#9ab6da, #c3d8ee 20px, #a9c3e2 90px, #b9d1ea 91px); box-shadow: inset 0 0 0 1px #d9e8f6; color: #222; font-family: var(--classic); font-size: 7px; }
.dlg-title { height: 19px; display: flex; align-items: center; gap: 2px; padding-top: 3px; font-family: var(--ui); font-size: 8px; }
.dlg-title > span { padding-left: 2px; }
.dlg-title button { width: 20px; height: 12px; border: 1px solid #7e97b4; border-radius: 2px; background: linear-gradient(#d3e1f0 45%, #a7bed8 50%, #c2d4e8); color: #fff; }
.dlg-title .red { border-color: #74342f; background: linear-gradient(#e0a193 45%, #c44533 50%, #d8705c); }
.glyph-min { width: 8px; height: 3px; border: 1px solid #888; background: #fff; }
.glyph-max { width: 8px; height: 6px; border: 2px solid #fff; outline: 1px solid #888; background: #666; outline-offset: -1px; }
.dlg-body { flex: 1; display: flex; flex-direction: column; background: #fff; }
.dlg-tools { height: 22px; display: flex; align-items: center; gap: 6px; padding: 0 3px 2px; background: #f0f0f0; border-bottom: 1px solid #8f969e; }
.dlg-tools i { width: 1px; height: 12px; background: #777; }
.dlg-list { flex: 1; }
table { width: 100%; border-collapse: collapse; table-layout: fixed; }
th, td { padding: 0; text-align: left; font-weight: 400; white-space: nowrap; }
th { height: 16px; background: linear-gradient(#fff 50%, #f3f4f6); }
th:first-child { padding-left: 4px; }
.c-subject { width: 138px; } .c-date { width: 80px; }
td { height: 12px; }
.subject { display: flex; align-items: center; padding-left: 5px; height: 12px; }
.subject span { flex: 1; line-height: 12px; background: #3399ff; color: #fff; }
.hl { background: #3399ff; color: #fff; }
.scroll { height: 12px; display: flex; background: #ededed; }
.scroll button { width: 13px; }
.track { flex: 1; display: flex; }
.thumb { width: 60%; border: 1px solid #a4a4a4; border-radius: 1px; background: linear-gradient(#f2f2f2 45%, #d6d6d6 50%, #c3c3c3); display: flex; gap: 1px; align-items: center; justify-content: center; }
.thumb i { width: 1px; height: 5px; background: #666; }
.spot { position: absolute; left: 557px; top: 127px; width: 31px; height: 32px; border-radius: 50%; background: #f6f404; padding: 16px 0 0 16px; }

.modules { height: 27px; display: flex; align-items: center; gap: 14px; padding-left: 14px; background: #e3e3e3; font-family: var(--wide); font-weight: 300; font-size: 16px; line-height: 26px; color: #444; }
.modules .on { color: #1684d1; }
.modules button { gap: 3px; }
.modules button i { width: 3px; height: 3px; border-radius: 50%; background: #555; }
.status { height: 15px; display: flex; align-items: center; padding: 0 6px 0 5px; background: #0072c6; color: #fff; font-family: var(--wide); font-size: 7px; }
.conn { margin: 0 14px 0 13px; }
.view { width: 25px; height: 15px; }
.view.on { background: #0062ab; }
.status input { appearance: none; width: 67px; height: 9px; margin: 0 18px 0 9px; background: linear-gradient(#b9dbf2, #b9dbf2) center / 100% 1px no-repeat; }
.status input::-webkit-slider-thumb { appearance: none; width: 1px; height: 5px; background: #fff; }
.taskbar { height: 26px; display: flex; align-items: stretch; background: linear-gradient(90deg, #7f91ad, #8798b4 35px, #a6bbdb 50px); border-top: 1px solid #7ea2ca; }
.taskbar > button { width: 41px; }
.taskbar .start { width: 40px; padding-right: 4px; }
.taskbar .running { width: 40px; border: 1px solid #7790b3; border-radius: 2px; background: linear-gradient(135deg, #e9f0f8, #c2d2e8); }
.tray { display: flex; align-items: center; gap: 7px; padding-left: 26px; background: linear-gradient(90deg, #a6bbdb, #8091ac 20px); }
.tray time { margin-left: 5px; text-align: center; line-height: 11px; color: #fff; font-family: var(--wide); font-size: 7px; }
.tray .peek { width: 9px; height: 25px; border-left: 1px solid #b4c2d6; background: linear-gradient(90deg, #46566f, #8698b2); }
.vm-status { height: 15px; display: flex; align-items: center; gap: 2px; padding: 2px 14px 0 1px; border-bottom: 1px solid #111; background: #f0f0f0; color: #222; }
.vm-status i { width: 1px; height: 10px; margin: 0 3px; background: #c6c6c6; }
</style>
